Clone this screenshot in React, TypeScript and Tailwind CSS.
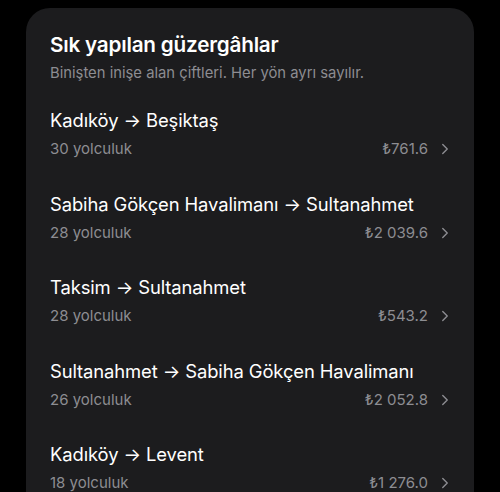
import { ChevronRight } from 'lucide-react'

interface Guzergah {
  nereden: string
  nereye: string
  yolculuk: number
  tutar: string
}

const guzergahlar: Guzergah[] = [
  { nereden: 'Kadıköy', nereye: 'Beşiktaş', yolculuk: 30, tutar: '₺761.6' },
  { nereden: 'Sabiha Gökçen Havalimanı', nereye: 'Sultanahmet', yolculuk: 28, tutar: '₺2 039.6' },
  { nereden: 'Taksim', nereye: 'Sultanahmet', yolculuk: 28, tutar: '₺543.2' },
  { nereden: 'Sultanahmet', nereye: 'Sabiha Gökçen Havalimanı', yolculuk: 26, tutar: '₺2 052.8' },
  { nereden: 'Kadıköy', nereye: 'Levent', yolculuk: 18, tutar: '₺1 276.0' },
]

export default function App() {
  return (
    <div className="h-[492px] w-[500px] overflow-hidden bg-black px-[26px] pt-[8px] font-['Inter',sans-serif]">
      <div className="rounded-[24px] bg-[#1c1c1e] pl-[24px] pr-[20px] pt-[23px] pb-6">
        <h2 className="text-[20.7px] font-semibold leading-[28px] tracking-[-0.2px] text-white">
          Sık yapılan güzergâhlar
        </h2>
        <p className="mt-[4px] text-[14.8px] leading-[20px] text-[#8d8d92]">
          Binişten inişe alan çiftleri. Her yön ayrı sayılır.
        </p>

        <ul className="mt-[8px]">
          {guzergahlar.map((g, i) => (
            <li key={i} className="pt-[17px] pb-[15.5px]">
              <p className="whitespace-nowrap text-[18.4px] leading-[24px] tracking-[-0.1px] text-white">
                {g.nereden} → {g.nereye}
              </p>
              <div className="mt-[7px] flex h-[20px] items-center text-[#8d8d92]">
                <span className="flex-1 text-[15px] leading-[20px]">{g.yolculuk} yolculuk</span>
                <span className="text-[15px] leading-[20px]">{g.tutar}</span>
                <ChevronRight className="ml-[8px] h-[18px] w-[18px]" strokeWidth={1.8} />
              </div>
            </li>
          ))}
        </ul>
      </div>
    </div>
  )
}
